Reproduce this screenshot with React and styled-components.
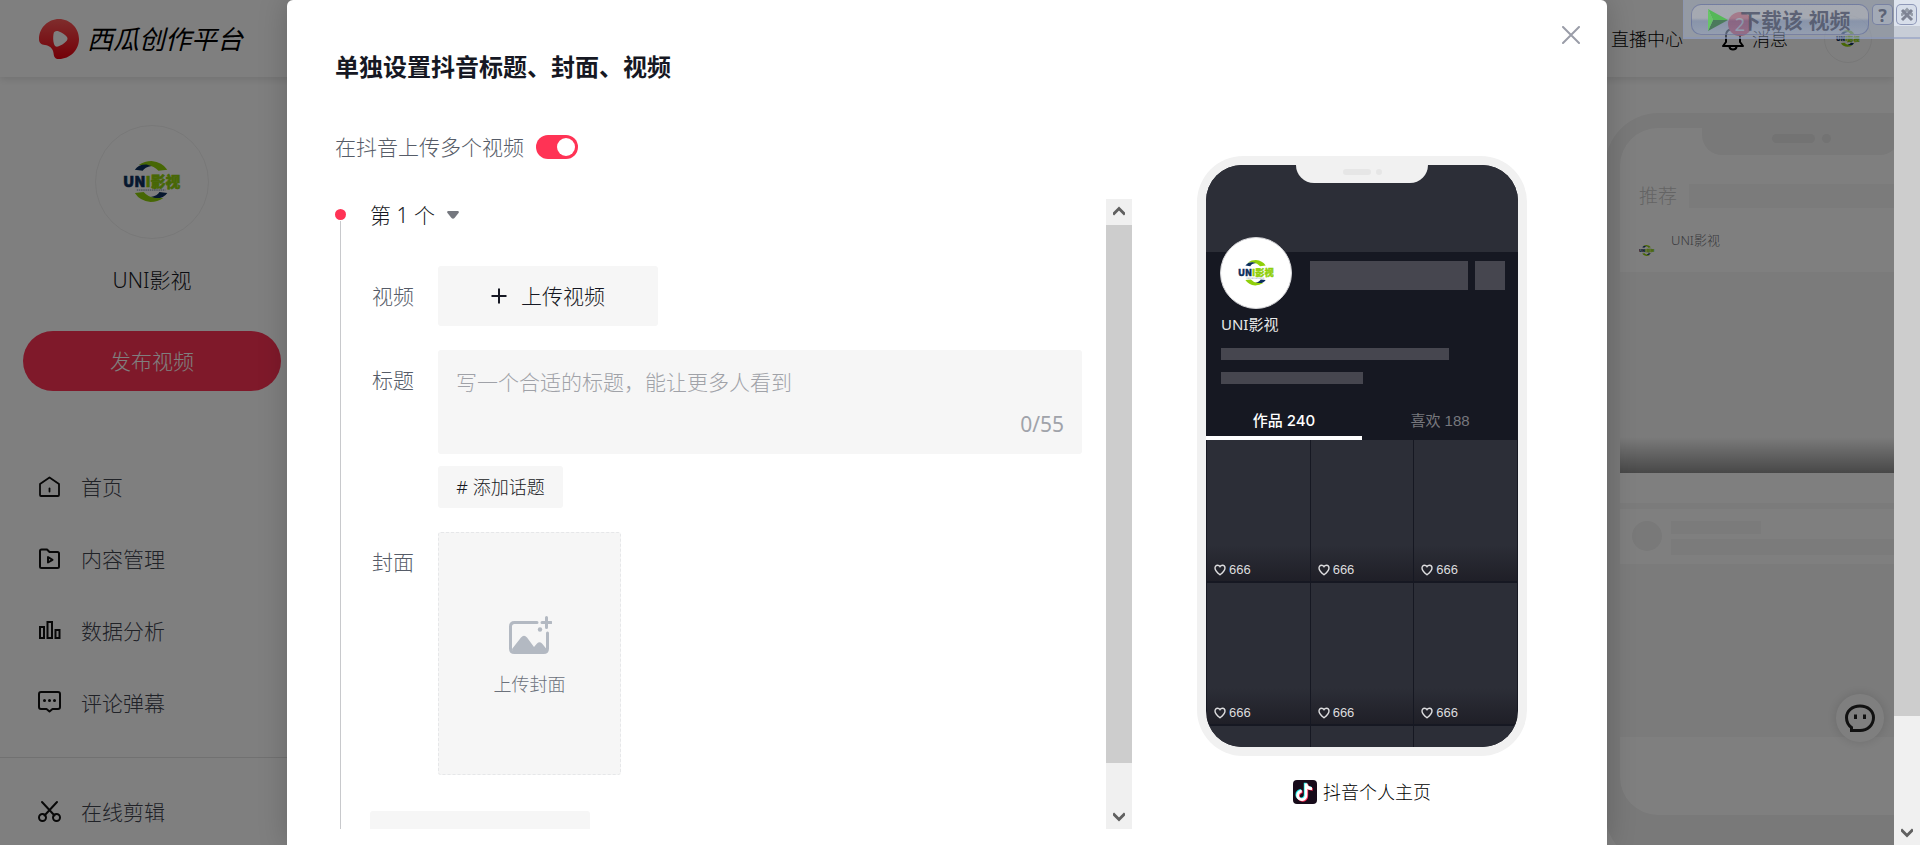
import React, { useState } from 'react';
import styled, { createGlobalStyle, css } from 'styled-components';

const GlobalStyle = createGlobalStyle`
  *, *::before, *::after {
    box-sizing: border-box;
  }

  body {
    margin: 0;
    background: #fff;
    color: #161823;
    font-family: 'Noto Sans', 'Noto Sans CJK SC', sans-serif;
    font-size: 18px;
    font-weight: 300;
    line-height: 28px;
  }

  button, textarea, input {
    margin: 0;
    padding: 0;
    border: none;
    background: none;
    color: inherit;
    font: inherit;
  }

  button {
    cursor: pointer;
  }

  a {
    color: inherit;
    text-decoration: none;
  }
`;

/* ---------- window ---------- */

const Window = styled.div`
  display: flex;
  height: 100vh;
  overflow: hidden;
  position: relative;
`;

const Page = styled.div`
  flex: 1;
  min-width: 0;
  position: relative;
  overflow: hidden;
`;

const ScrollTrack = styled.div`
  flex: none;
  width: 26px;
  display: flex;
  flex-direction: column;
  background: #f0f0f0;
`;

const ScrollArrow = styled.div`
  flex: none;
  height: 26px;
  display: flex;
  align-items: center;
  justify-content: center;
`;

const ScrollRail = styled.div`
  flex: 1;
`;

const ScrollThumb = styled.div`
  height: ${props => props.$size};
  background: #cdcdcd;
`;

/* ---------- header ---------- */

const Header = styled.header`
  position: relative;
  z-index: 1;
  display: flex;
  align-items: center;
  justify-content: space-between;
  height: 77px;
  padding: 0 22px 0 39px;
  background: #fff;
  box-shadow: 0 2px 8px rgba(0, 0, 0, 0.12);
`;

const Brand = styled.a`
  display: flex;
  align-items: center;
  gap: 8px;
  font-size: 26px;
  font-weight: 400;
  font-style: italic;
  color: #000;
`;

const HeaderLinks = styled.nav`
  display: flex;
  align-items: center;
  gap: 36px;
  color: #000;
`;

const Message = styled.a`
  display: flex;
  align-items: center;
  gap: 8px;
`;

const BellWrap = styled.span`
  position: relative;
  display: flex;
  margin-left: 3px;
`;

const Badge = styled.span`
  position: absolute;
  left: 6px;
  top: -15px;
  width: 24px;
  height: 24px;
  border-radius: 50%;
  background: #ff3355;
  color: #fff;
  font-size: 18px;
  font-weight: 400;
  line-height: 24px;
  text-align: center;
`;

const Avatar = styled.div`
  flex: none;
  width: ${props => props.$size}px;
  height: ${props => props.$size}px;
  display: flex;
  align-items: center;
  justify-content: center;
  border: 1px solid ${props => props.$ring || '#f0f0f0'};
  border-radius: 50%;
  background: #fff;

  svg {
    width: 51%;
  }
`;

/* ---------- sidebar ---------- */

const Body = styled.div`
  display: flex;
  justify-content: space-between;
`;

const Sidebar = styled.aside`
  width: 304px;
  display: flex;
  flex-direction: column;
  align-items: center;
  padding: 48px 23px 0;
  font-size: 21px;
`;

const UserName = styled.div`
  margin: 27px 0 37px;
`;

const PublishButton = styled.button`
  width: 100%;
  height: 60px;
  border-radius: 30px;
  background: #ff3355;
  color: #fff;
`;

const Menu = styled.nav`
  align-self: stretch;
  display: flex;
  flex-direction: column;
  gap: 44px;
  margin: 0 -23px;
  padding: ${props => (props.$divided ? '40px' : '82px')} 38px 40px;
  border-top: ${props => (props.$divided ? '1px solid #e3e3e3' : 'none')};
`;

const MenuItem = styled.a`
  display: flex;
  align-items: center;
  gap: 19px;
  color: #41444f;

  svg {
    color: #111;
  }
`;

/* ---------- page preview behind the dialog ---------- */

const Preview = styled.section`
  flex: none;
  width: 392px;
  margin: 36px -103px 0 0;
  padding: 15px;
  border-radius: 54px;
  background: #f2f2f2;
`;

const PreviewScreen = styled.div`
  display: flex;
  flex-direction: column;
  align-items: center;
  height: 687px;
  border-radius: 38px;
  background: #fff;
  overflow: hidden;
`;

const Notch = styled.div`
  flex: none;
  display: flex;
  justify-content: center;
  gap: ${props => (props.$small ? 5 : 7)}px;
  width: ${props => (props.$small ? 132 : 198)}px;
  height: ${props => (props.$small ? 18 : 27)}px;
  padding-top: ${props => (props.$small ? 4 : 6)}px;
  border-radius: 0 0 20px 20px;
  background: ${props => (props.$small ? '#f1f1f1' : '#f2f2f2')};

  &::before, &::after {
    content: '';
    width: ${props => (props.$small ? 28 : 43)}px;
    height: ${props => (props.$small ? 6 : 9)}px;
    border-radius: 5px;
    background: #e6e6e6;
  }

  &::after {
    width: ${props => (props.$small ? 6 : 9)}px;
  }
`;

const PreviewTabs = styled.div`
  align-self: stretch;
  display: flex;
  align-items: center;
  gap: 12px;
  margin: 27px 0 0 19px;
  color: #c8c8c8;
  font-size: 19px;
`;

const PreviewBar = styled.div`
  flex: ${props => (props.$grow ? 1 : 'none')};
  width: ${props => props.$width || '100%'};
  height: ${props => props.$height}px;
  background: #f6f6f6;
`;

const PreviewAuthor = styled.div`
  align-self: stretch;
  display: flex;
  gap: 8px;
  height: 62px;
  padding: 16px 11px 0;
  color: #75767c;
  font-size: 13px;
`;

const AuthorAvatar = styled.div`
  padding-top: 9px;
`;

const PreviewVideo = styled.div`
  align-self: stretch;
  height: ${props => props.$height}px;
  background: #f7f7f7;
  ${props => props.$shaded && css`
    background: linear-gradient(#f7f7f7 165px, #909090);
  `}
`;

const PreviewCard = styled.div`
  align-self: stretch;
  display: flex;
  gap: 9px;
  height: 61px;
  margin-top: 30px;
  padding: 12px 0 0 12px;
  border-top: 6px solid #f7f7f7;
`;

const PreviewDot = styled.div`
  width: 30px;
  height: 30px;
  border-radius: 50%;
  background: #f2f2f2;
`;

const PreviewLines = styled.div`
  flex: 1;
  display: flex;
  flex-direction: column;
  gap: 5px;
`;

const ChatButton = styled.button`
  position: absolute;
  right: 10px;
  bottom: 103px;
  z-index: 2;
  width: 48px;
  height: 48px;
  display: flex;
  align-items: center;
  justify-content: center;
  border-radius: 50%;
  background: #fff;
  box-shadow: 0 0 12px rgba(0, 0, 0, 0.14);
`;

/* ---------- dialog ---------- */

const Overlay = styled.div`
  position: absolute;
  inset: 0;
  z-index: 3;
  display: flex;
  justify-content: center;
  background: rgba(0, 0, 0, 0.5);
`;

const Dialog = styled.section`
  position: relative;
  display: flex;
  justify-content: space-between;
  width: 1320px;
  max-width: 100%;
  height: 100%;
  padding: 50px 80px 16px 48px;
  border-radius: 6px 6px 0 0;
  background: #fff;
  box-shadow: 0 0 30px rgba(0, 0, 0, 0.2);
`;

const CloseButton = styled.button`
  position: absolute;
  top: 23px;
  right: 24px;
  width: 24px;
  height: 24px;
  display: flex;
  align-items: center;
  justify-content: center;
`;

const Settings = styled.div`
  display: flex;
  flex-direction: column;
  width: 797px;
`;

const Title = styled.h2`
  margin: 0;
  font-size: 24px;
  line-height: 34px;
  font-weight: 700;
`;

const SwitchRow = styled.label`
  display: flex;
  align-items: center;
  gap: 12px;
  margin: 48px 0 37px;
  color: #565c68;
  font-size: 21px;
  line-height: 30px;
`;

const Switch = styled.input`
  appearance: none;
  width: 42px;
  height: 24px;
  border-radius: 12px;
  background: #d0d0d3;
  cursor: pointer;

  &::before {
    content: '';
    display: block;
    width: 18px;
    height: 18px;
    margin: 3px;
    border-radius: 50%;
    background: #fff;
  }

  &:checked {
    background: #ff3355;
  }

  &:checked::before {
    margin-left: 21px;
  }
`;

const ScrollPane = styled.div`
  flex: 1;
  min-height: 0;
  display: flex;
  justify-content: space-between;
`;

const PaneContent = styled.div`
  flex: 1;
  display: flex;
  gap: 24px;
  padding-right: 24px;
  overflow: hidden;
`;

const Timeline = styled.div`
  display: flex;
  flex-direction: column;
  align-items: center;
  width: 11px;
  height: 740px;
  padding-top: 10px;

  &::before {
    content: '';
    flex: none;
    width: 11px;
    height: 11px;
    margin-bottom: 1px;
    border-radius: 50%;
    background: #ff3355;
  }

  &::after {
    content: '';
    flex: 1;
    width: 1px;
    background: #c8c9cc;
  }
`;

const Form = styled.form`
  flex: 1;
  display: flex;
  flex-direction: column;
  align-items: stretch;
  gap: 24px;
  height: 740px;
  font-size: 21px;
`;

const EntryToggle = styled.button`
  align-self: flex-start;
  display: flex;
  align-items: center;
  gap: 12px;
  height: 32px;
  margin-bottom: 11px;
`;

const Field = styled.div`
  display: flex;
`;

const FieldLabel = styled.label`
  flex: none;
  width: 68px;
  padding-right: 24px;
  color: #565c68;
  line-height: 60px;
  text-align: right;
`;

const FieldBody = styled.div`
  flex: 1;
  display: flex;
  flex-direction: column;
  align-items: flex-start;
  gap: 12px;
`;

const GreyButton = styled.button`
  flex: none;
  display: flex;
  align-items: center;
  justify-content: center;
  gap: 14px;
  width: 220px;
  height: 60px;
  border-radius: 3px;
  background: #f6f6f6;
  color: #161823;
`;

const TopicButton = styled(GreyButton)`
  width: 125px;
  height: 42px;
  font-size: 18px;
`;

const TitleBox = styled.div`
  display: flex;
  flex-direction: column;
  width: 100%;
  height: 104px;
  padding: 16px 18px;
  border-radius: 3px;
  background: #f6f6f6;
`;

const TitleInput = styled.textarea`
  flex: 1;
  resize: none;
  outline: none;
  line-height: 32px;

  &::placeholder {
    color: #a0a2a8;
    opacity: 1;
  }
`;

const Counter = styled.span`
  align-self: flex-end;
  color: #a0a3aa;
  font-weight: 400;
`;

const CoverButton = styled.button`
  display: flex;
  flex-direction: column;
  align-items: center;
  justify-content: center;
  gap: 14px;
  width: 183px;
  height: 243px;
  padding-top: 6px;
  border: 1px dashed #e6e7e9;
  border-radius: 3px;
  background: #f6f6f6;
  color: #6c717b;
  font-size: 18px;
`;

const MoreRow = styled.div`
  padding-top: 12px;
`;

/* ---------- phone ---------- */

const PhoneColumn = styled.div`
  display: flex;
  flex-direction: column;
  align-items: center;
  gap: 22px;
  padding-top: 106px;
`;

const Phone = styled.div`
  width: 330px;
  height: 600px;
  padding: 9px;
  border-radius: 46px;
  background: #f1f1f1;
`;

const Screen = styled.div`
  display: flex;
  flex-direction: column;
  height: 582px;
  border-radius: 36px;
  background: #161822;
  overflow: hidden;
`;

const Cover = styled.div`
  flex: none;
  display: flex;
  justify-content: center;
  height: 87px;
  background: #2c2e37;
`;

const Profile = styled.div`
  display: flex;
  flex-direction: column;
  padding: 0 13px 0 15px;
`;

const ProfileTop = styled.div`
  display: flex;
  align-items: flex-start;
  height: 60px;

  > :first-child {
    margin: -15px 18px 0 -1px;
  }
`;

const Block = styled.div`
  flex: ${props => (props.$grow ? 1 : 'none')};
  width: ${props => props.$width}px;
  height: ${props => props.$height}px;
  margin: ${props => props.$margin || 0};
  background: #46464f;
`;

const ProfileName = styled.div`
  margin-bottom: 12px;
  color: #e8e8e9;
  font-size: 15px;
  font-weight: 400;
  line-height: 24px;
`;

const PhoneTabs = styled.div`
  flex: none;
  display: flex;
  height: 42px;
  margin-top: 14px;
`;

const PhoneTab = styled.div`
  flex: 1;
  color: #76777d;
  font-family: 'Liberation Sans', 'Noto Sans CJK SC', sans-serif;
  font-size: 15px;
  font-weight: 400;
  line-height: 46px;
  text-align: center;
  ${props => props.$active && css`
    border-bottom: 4px solid #fff;
    color: #fff;
    font-family: Inter, 'Noto Sans CJK SC', sans-serif;
    font-weight: 500;
  `}
`;

const Works = styled.div`
  flex: none;
  display: grid;
  grid-template-columns: repeat(3, 1fr);
  grid-auto-rows: 141px;
  gap: 2px 1px;
  padding: 0 1px;
`;

const Work = styled.div`
  display: flex;
  align-items: flex-end;
  gap: 3px;
  padding: 0 7px 1px;
  background: linear-gradient(#2c2e37 105px, #1f1f27);
  color: #dcdcde;
  font-family: 'Liberation Sans', sans-serif;
  font-size: 13px;
  font-weight: 400;
  line-height: 20px;

  svg {
    margin-bottom: 4px;
  }
`;

const PhoneCaption = styled.div`
  display: flex;
  align-items: center;
  gap: 6px;
  color: #000;
`;

/* ---------- download helper bar ---------- */

const DownloadBar = styled.div`
  position: absolute;
  top: 0;
  right: 0;
  z-index: 4;
  display: flex;
  align-items: flex-start;
  gap: 3px;
  height: 39px;
  padding: 4px 3px 0 7px;
  border: 1px solid rgba(134, 148, 190, 0.5);
  border-width: 0 0 2px 1px;
  background: rgba(190, 205, 235, 0.35);
  color: rgba(80, 86, 106, 0.85);
  font-weight: 700;
`;

const DownloadButton = styled.button`
  display: flex;
  align-items: center;
  gap: 12px;
  width: 178px;
  height: 31px;
  padding-left: 16px;
  border: 1px solid rgba(92, 104, 150, 0.6);
  border-radius: 10px;
  background: linear-gradient(rgba(205, 205, 210, 0.3) 45%, rgba(110, 135, 185, 0.3) 55%, rgba(150, 170, 210, 0.25));
  font-size: 21px;
  font-weight: 700;
  white-space: nowrap;
`;

const SmallButton = styled.button`
  width: 21px;
  height: 21px;
  display: flex;
  align-items: center;
  justify-content: center;
  border: 1px solid rgba(92, 104, 150, 0.6);
  border-radius: 5px;
  background: rgba(200, 208, 225, 0.3);
  font-size: 18px;
  font-weight: 700;
`;

/* ---------- drawings ---------- */

const UniLogo = () => (
  <svg viewBox="0 0 58 42" aria-hidden="true">
    <g>
      <path d="M16 4Q22 0 29 0Q40 1 45 9L36 10Q32 5 24 4Z" fill="#8fcf0a" />
      <path d="M12 9Q16 3 24 3.5L29 5Q22 6 20 10Z" fill="#0c2f5c" />
    </g>
    <g transform="rotate(180 28.5 20.8)">
      <path d="M12 9Q16 3 24 3.5L29 5Q22 6 20 10Z" fill="#0c2f5c" />
      <path d="M16 4Q22 0 29 0Q40 1 45 9L36 10Q32 5 24 4Z" fill="#8fcf0a" />
    </g>
    <text
      x="0"
      y="26"
      fontFamily="'Noto Sans CJK SC', sans-serif"
      fontWeight="900"
      fontSize="15"
      fill="#0c2f5c"
      stroke="#0c2f5c"
      strokeWidth=".6"
    >
      UN<tspan fill="#8fcf0a" stroke="#8fcf0a">I影视</tspan>
    </text>
    <path d="M14 29.5H43" stroke="#0c2f5c" strokeWidth="1" strokeDasharray="1.5 .7" opacity=".6" />
  </svg>
);

const MelonIcon = () => (
  <svg width="40" height="40" viewBox="0 0 40 40" aria-hidden="true">
    <defs>
      <linearGradient id="melon" x1="0" y1="0" x2="0" y2="1">
        <stop offset="0" stopColor="#ff5a5a" />
        <stop offset="1" stopColor="#e8000f" />
      </linearGradient>
    </defs>
    <path d="M20 0C31 0 40 9 40 20C40 31 31 40 20 40C16 40 15 38 14.500 34C14 29 10 26.500 6 26C2 25.500 0 24 0 20C0 9 9 0 20 0Z" fill="url(#melon)" />
    <path d="M14.500 15C15 12 17.500 11.500 20 12.500C23 13.500 26 15.500 28 18C29 19.500 28.500 21 27 22.500C25 24.500 22 26.500 19 27.500C17 28 15.500 27 15 25C14 22 14 18 14.500 15Z" fill="#fff" />
  </svg>
);

const lineProps = {
  fill: 'none',
  stroke: 'currentColor',
  strokeWidth: 2,
  strokeLinecap: 'round',
  strokeLinejoin: 'round',
};

const HomeIcon = () => (
  <svg width="24" height="24" viewBox="0 0 24 24" {...lineProps} strokeWidth="1.8">
    <path d="M2 9L11.500 2.500L21 9V20Q21 21 20 21H3Q2 21 2 20Z" />
    <path d="M11.500 13.500V16.500" />
  </svg>
);

const FolderIcon = () => (
  <svg width="24" height="24" viewBox="0 0 24 24" {...lineProps}>
    <path d="M2 4Q2 2.500 3.500 2.500H9L11.500 5H19.500Q21 5 21 6.500V19.500Q21 21 19.500 21H3.500Q2 21 2 19.500Z" />
    <path d="M10 10V15.500L14.500 12.800Z" />
  </svg>
);

const ChartIcon = () => (
  <svg width="24" height="24" viewBox="0 0 24 24" {...lineProps} strokeLinejoin="miter">
    <path d="M2 8H6V19H2ZM9.500 3H14V19H9.500ZM17.500 11H21.500V19H17.500Z" />
  </svg>
);

const CommentIcon = () => (
  <svg width="24" height="24" viewBox="0 0 24 24" {...lineProps}>
    <path d="M3 1H20Q22 1 22 3V16Q22 18 20 18H14.500L11.500 20.500L8.500 18H3Q1 18 1 16V3Q1 1 3 1Z" />
    <path d="M6.500 9.500h.01M11.500 9.500h.01M16.500 9.500h.01" strokeWidth="3" />
  </svg>
);

const ScissorsIcon = () => (
  <svg width="24" height="24" viewBox="0 0 24 24" {...lineProps}>
    <path d="M4 2L16.500 15.500M19 2L6.500 15.500" />
    <circle cx="4.500" cy="17.500" r="3.500" />
    <circle cx="18.500" cy="17.500" r="3.500" />
  </svg>
);

const BellIcon = () => (
  <svg width="22" height="24" viewBox="0 0 22 24" {...lineProps}>
    <path d="M1 19H21L18 15V8.500Q18 2 11 2Q4 2 4 8.500V15Z" />
    <path d="M7.500 20Q8 22.500 11 22.500Q14 22.500 14.500 20" />
  </svg>
);

const ChatIcon = () => (
  <svg width="32" height="30" viewBox="0 0 32 30" fill="none" stroke="#222" strokeWidth="3">
    <path d="M16 3C24 3 29.500 8 29.500 14.500C29.500 22 23.500 27.500 16 27.500H7.500V24.500C4 22 2.500 18.500 2.500 14.500C2.500 8 8 3 16 3Z" />
    <path d="M11.500 11.500V16M20.500 11.500V16" />
  </svg>
);

const PictureIcon = () => (
  <svg width="44" height="40" viewBox="0 0 44 40" fill="none" stroke="#b3b9c2" strokeWidth="3" strokeLinecap="round">
    <path d="M29 6.500H6.500Q2.500 6.500 2.500 10.500V32.500Q2.500 36.500 6.500 36.500H35.500Q39.500 36.500 39.500 32.500V17" />
    <path d="M38.500 1.500V11.500M34 6.500H43" />
    <circle cx="32" cy="13.500" r="2.200" fill="#b3b9c2" stroke="none" />
    <path d="M4 33L13 21.500Q16 18 19 21.500L26 31L29 27.500Q31.500 25 34 27.500L38.500 33Q38 36.500 35.500 36.500H6.500Q4.500 36.500 4 33Z" fill="#b3b9c2" stroke="none" />
  </svg>
);

const HeartIcon = () => (
  <svg width="12" height="12" viewBox="0 0 12 12" fill="none" stroke="#dcdcde" strokeWidth="1.4">
    <path d="M6 10.800C3 8.500 1 6.500 1 4C1 2.300 2.200 1.200 3.500 1.200C4.800 1.200 5.500 1.800 6 2.600C6.500 1.800 7.200 1.200 8.500 1.200C9.800 1.200 11 2.300 11 4C11 6.500 9 8.500 6 10.800Z" />
  </svg>
);

const notePath = 'M13 3.500V15A4.200 4.200 0 1 1 8.800 11.200M13 3.500C13.300 6.500 15.500 8.500 19 8.600';

const DouyinIcon = () => (
  <svg width="24" height="24" viewBox="0 0 24 24" fill="none" strokeWidth="2.8">
    <rect width="24" height="24" rx="4" fill="#170b1a" />
    <path d={notePath} stroke="#25f4ee" transform="translate(-.8 -.7)" />
    <path d={notePath} stroke="#fe2c55" transform="translate(.8 .7)" />
    <path d={notePath} stroke="#fff" />
  </svg>
);

const Chevron = ({ up }) => (
  <svg width="12" height="12" viewBox="0 0 12 12" fill="none" stroke="#606060" strokeWidth="3">
    <path d={up ? 'M0 8.500L6 2.500L12 8.500' : 'M0 3.500L6 9.500L12 3.500'} />
  </svg>
);

const ScrollBar = ({ size }) => (
  <ScrollTrack aria-hidden="true">
    <ScrollArrow><Chevron up /></ScrollArrow>
    <ScrollRail>
      <ScrollThumb $size={size} />
    </ScrollRail>
    <ScrollArrow><Chevron /></ScrollArrow>
  </ScrollTrack>
);

const menu = [
  { label: '首页', Icon: HomeIcon },
  { label: '内容管理', Icon: FolderIcon },
  { label: '数据分析', Icon: ChartIcon },
  { label: '评论弹幕', Icon: CommentIcon },
];

const works = [666, 666, 666, 666, 666, 666, null, null, null];

function BackgroundPage() {
  return (
    <>
      <Header>
        <Brand href="#">
          <MelonIcon />
          西瓜创作平台
        </Brand>
        <HeaderLinks>
          <a href="#live">直播中心</a>
          <Message href="#message">
            <BellWrap>
              <BellIcon />
              <Badge>2</Badge>
            </BellWrap>
            消息
          </Message>
          <Avatar $size={48}><UniLogo /></Avatar>
        </HeaderLinks>
      </Header>
      <Body>
        <Sidebar>
          <Avatar $size={114}><UniLogo /></Avatar>
          <UserName>UNI影视</UserName>
          <PublishButton type="button">发布视频</PublishButton>
          <Menu>
            {menu.map(({ label, Icon }) => (
              <MenuItem key={label} href="#">
                <Icon />
                {label}
              </MenuItem>
            ))}
          </Menu>
          <Menu $divided>
            <MenuItem href="#">
              <ScissorsIcon />
              在线剪辑
            </MenuItem>
          </Menu>
        </Sidebar>
        <Preview>
          <PreviewScreen>
            <Notch />
            <PreviewTabs>
              推荐
              <PreviewBar $grow $height={24} />
            </PreviewTabs>
            <PreviewAuthor>
              <AuthorAvatar>
                <Avatar $size={32} $ring="#fff"><UniLogo /></Avatar>
              </AuthorAvatar>
              UNI影视
            </PreviewAuthor>
            <PreviewVideo $height={201} $shaded />
            <PreviewCard>
              <PreviewDot />
              <PreviewLines>
                <PreviewBar $width="90px" $height={13} />
                <PreviewBar $height={16} />
              </PreviewLines>
            </PreviewCard>
            <PreviewVideo $height={173} />
          </PreviewScreen>
        </Preview>
      </Body>
      <ChatButton type="button" aria-label="客服"><ChatIcon /></ChatButton>
    </>
  );
}

function PhonePreview() {
  return (
    <PhoneColumn>
      <Phone>
        <Screen>
          <Cover><Notch $small /></Cover>
          <Profile>
            <ProfileTop>
              <Avatar $size={72} $ring="#d5d5d8"><UniLogo /></Avatar>
              <Block $grow $height={29} $margin="9px 7px 0 0" />
              <Block $width={30} $height={29} $margin="9px 0 0" />
            </ProfileTop>
            <ProfileName>UNI影视</ProfileName>
            <Block $width={228} $height={12} />
            <Block $width={142} $height={12} $margin="12px 0 0" />
          </Profile>
          <PhoneTabs>
            <PhoneTab $active>作品 240</PhoneTab>
            <PhoneTab>喜欢 188</PhoneTab>
          </PhoneTabs>
          <Works>
            {works.map((count, index) => (
              <Work key={index}>
                {count && <HeartIcon />}
                {count}
              </Work>
            ))}
          </Works>
        </Screen>
      </Phone>
      <PhoneCaption>
        <DouyinIcon />
        抖音个人主页
      </PhoneCaption>
    </PhoneColumn>
  );
}

function App() {
  const [multiple, setMultiple] = useState(true);
  const [title, setTitle] = useState('');

  return (
    <Window>
      <GlobalStyle />
      <Page>
        <BackgroundPage />
        <Overlay>
          <Dialog role="dialog" aria-labelledby="dialog-title">
            <Settings>
              <Title id="dialog-title">单独设置抖音标题、封面、视频</Title>
              <SwitchRow>
                在抖音上传多个视频
                <Switch
                  type="checkbox"
                  role="switch"
                  checked={multiple}
                  onChange={(e) => setMultiple(e.target.checked)}
                />
              </SwitchRow>
              <ScrollPane>
                <PaneContent>
                  <Timeline />
                  <Form onSubmit={(e) => e.preventDefault()}>
                    <EntryToggle type="button">
                      第 1 个
                      <svg width="12" height="8" viewBox="0 0 12 8" fill="#75787f">
                        <path d="M1 0H11Q12.500 .5 11.500 2L7.500 7Q6 8.500 4.500 7L.5 2Q-.5 .5 1 0Z" />
                      </svg>
                    </EntryToggle>
                    <Field>
                      <FieldLabel htmlFor="video">视频</FieldLabel>
                      <GreyButton id="video" type="button">
                        <svg width="16" height="16" viewBox="0 0 16 16" stroke="#161823" strokeWidth="2">
                          <path d="M8 .5V15.500M.5 8H15.500" />
                        </svg>
                        上传视频
                      </GreyButton>
                    </Field>
                    <Field>
                      <FieldLabel htmlFor="title">标题</FieldLabel>
                      <FieldBody>
                        <TitleBox>
                          <TitleInput
                            id="title"
                            maxLength={55}
                            placeholder="写一个合适的标题，能让更多人看到"
                            value={title}
                            onChange={(e) => setTitle(e.target.value)}
                          />
                          <Counter>{title.length}/55</Counter>
                        </TitleBox>
                        <TopicButton type="button"># 添加话题</TopicButton>
                      </FieldBody>
                    </Field>
                    <Field>
                      <FieldLabel htmlFor="cover">封面</FieldLabel>
                      <CoverButton id="cover" type="button">
                        <PictureIcon />
                        上传封面
                      </CoverButton>
                    </Field>
                    <MoreRow>
                      <GreyButton type="button" aria-label="添加视频" />
                    </MoreRow>
                  </Form>
                </PaneContent>
                <ScrollBar size="93%" />
              </ScrollPane>
            </Settings>
            <PhonePreview />
            <CloseButton type="button" aria-label="关闭">
              <svg width="18" height="18" viewBox="0 0 18 18" stroke="#9a9da8" strokeWidth="2" strokeLinecap="round">
                <path d="M1 1L17 17M17 1L1 17" />
              </svg>
            </CloseButton>
          </Dialog>
        </Overlay>
      </Page>
      <ScrollBar size="87%" />
      <DownloadBar>
        <DownloadButton type="button">
          <svg width="20" height="22" viewBox="0 0 20 22">
            <path d="M0 0L20 11H5Z" fill="#55b858" />
            <path d="M0 22L20 11H5Z" fill="#4b7a5c" />
            <path d="M0 0L5 11L0 22Z" fill="#66c566" />
          </svg>
          下载该 视频
        </DownloadButton>
        <SmallButton type="button">?</SmallButton>
        <SmallButton type="button" aria-label="关闭下载栏">
          <svg width="14" height="14" viewBox="0 0 14 14" stroke="#7f8494" strokeWidth="3">
            <path d="M2 2L12 12M12 2L2 12" />
          </svg>
        </SmallButton>
      </DownloadBar>
    </Window>
  );
}

export default App;
